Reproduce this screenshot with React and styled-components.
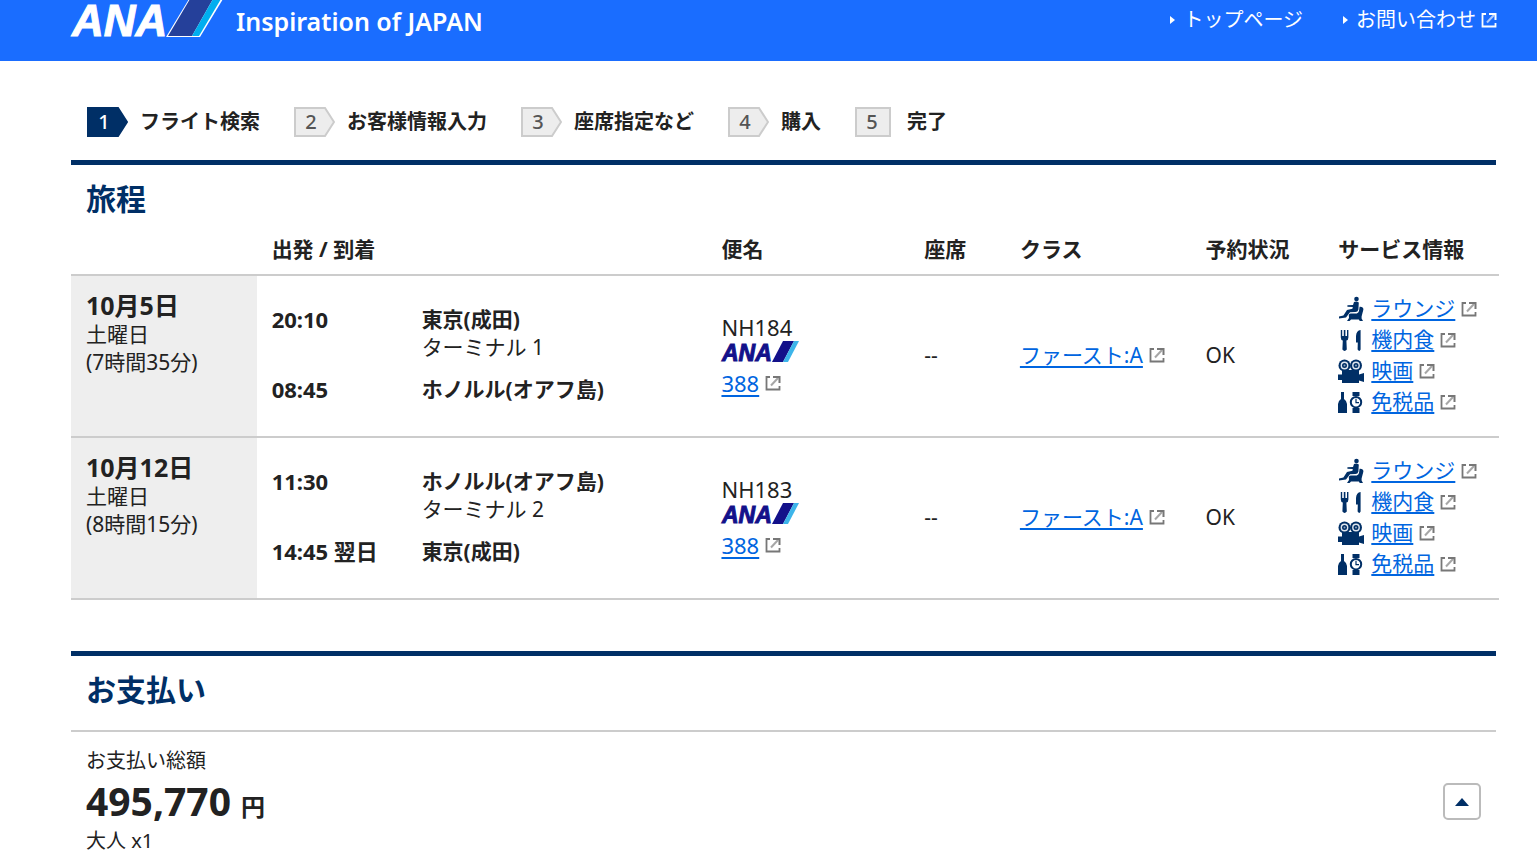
import React from 'react';
import styled, { createGlobalStyle } from "styled-components"


const steps = [
  { no: 1, label: "フライト検索" },
  { no: 2, label: "お客様情報入力" },
  { no: 3, label: "座席指定など" },
  { no: 4, label: "購入" },
  { no: 5, label: "完了" },
]

const flights = [
  {
    date: "10月5日", day: "土曜日", duration: "(7時間35分)",
    dep: { time: "20:10", place: "東京(成田)", terminal: "ターミナル 1" },
    arr: { time: "08:45", place: "ホノルル(オアフ島)" },
    no: "NH184", plane: "388", seat: "--", cabin: "ファースト:A", status: "OK",
  },
  {
    date: "10月12日", day: "土曜日", duration: "(8時間15分)",
    dep: { time: "11:30", place: "ホノルル(オアフ島)", terminal: "ターミナル 2" },
    arr: { time: "14:45 翌日", place: "東京(成田)" },
    no: "NH183", plane: "388", seat: "--", cabin: "ファースト:A", status: "OK",
  },
]

const services = [
  { label: "ラウンジ", Icon: LoungeIcon },
  { label: "機内食", Icon: MealIcon },
  { label: "映画", Icon: MovieIcon },
  { label: "免税品", Icon: DutyFreeIcon },
]


function HeaderLogo() {
  return (
    <Logo width="151" height="38" viewBox="0 0 151 38" role="img" aria-label="ANA">
      <LogoText x="1" y="36" fontSize="44" fill="#fff" stroke="#fff" strokeWidth="1">ANA</LogoText>
      <path d="M95 37 L118 -1 H152 L129 37 Z" fill="#fff" />
      <path d="M97 36 L119 -1 H142 L121 36 Z" fill="#25409a" />
      <path d="M121 36 L142 -1 H150 L128 36 Z" fill="#00aeef" />
    </Logo>
  )
}

function CarrierLogo() {
  return (
    <Carrier width="78" height="21" viewBox="0 0 78 21" role="img" aria-label="ANA">
      <LogoText x="1" y="20" fontSize="23" fill="#13118a" stroke="#13118a" strokeWidth="1">ANA</LogoText>
      <path d="M51 21 L62 0 H73 L62 21 Z" fill="#13118a" />
      <path d="M62 21 L73 0 H78 L67 21 Z" fill="#3db5ea" />
    </Carrier>
  )
}

function External({ light }) {
  return (
    <svg width="16" height="16" viewBox="0 0 16 16" fill="none" stroke={light ? "#fff" : "#777"} aria-hidden="true">
      <path d="M5 2 H1.5 V14.5 H14.5 V11" strokeWidth="1.8" />
      <path d="M8 2 H14.5 V8" strokeWidth="2" />
      <path d="M13 3 L6 10.5" strokeWidth="2" opacity="0.65" />
    </svg>
  )
}

function LoungeIcon() {
  return (
    <svg width="26" height="26" viewBox="0 0 26 26" fill="#002f66" aria-hidden="true">
      <circle cx="18.5" cy="3" r="2.3" />
      <path d="M16 6 Q18.5 5 20.8 6.4 L20.4 13.5 Q19.8 16 17.4 16 L12 16.2 L8 21.5 L1 22.5 V20.6 L5.4 19.6 L9 14 L14.4 12.8 L14.8 11 L9.4 10.8 V9.2 L15 9 Z" />
      <path d="M21.6 10.8 Q25.4 10.5 25.4 13.6 L23.6 20.5 V22.5 L25 25 H21.8 L20.8 23.4 H13 L11.6 25 H9 L11 22 L10.8 19 Q11 17.2 13 17.4 H18.8 Q20.6 17 21 15 Z" />
    </svg>
  )
}

function MealIcon() {
  return (
    <svg width="26" height="26" viewBox="0 0 26 26" fill="#002f66" aria-hidden="true">
      <path d="M2.8 3 H4.2 V9 H5.8 V3 H7.4 V9 H9 V3 H10.4 V10.5 Q10.4 13 8.4 13.5 L8.8 22.5 Q6.6 25.4 4.4 22.5 L4.8 13.5 Q2.8 13 2.8 10.5 Z" />
      <path d="M22.6 3 V22.5 Q21.4 25.4 19.6 22.5 L19.8 15.5 H18 V9 Q18.4 3.6 22.6 3 Z" />
    </svg>
  )
}

function MovieIcon() {
  return (
    <svg width="26" height="26" viewBox="0 0 26 26" fill="#002f66" aria-hidden="true">
      <circle cx="6.5" cy="7.5" r="6" />
      <circle cx="18" cy="7.5" r="6" />
      <path d="M4 12 H21 V16.5 L26 15 V24 L21 22.5 V25 H4 V22 H0 V16.5 H4 Z" />
      <g fill="none" stroke="#dfe6ee" strokeWidth="1.4">
        <circle cx="6.5" cy="7.5" r="3.2" />
        <circle cx="18" cy="7.5" r="3.2" />
      </g>
      <circle cx="6.5" cy="7.5" r="1" fill="#8fa5bf" />
      <circle cx="18" cy="7.5" r="1" fill="#8fa5bf" />
    </svg>
  )
}

function DutyFreeIcon() {
  return (
    <svg width="26" height="26" viewBox="0 0 26 26" fill="#002f66" aria-hidden="true">
      <path d="M3 3 H6 V10 Q9 12 9 15 V24 H0 V15 Q0 12 3 10 Z" />
      <path d="M14.5 3 H21.5 V7 H14.5 Z M14.5 19 H21.5 V24 H14.5 Z" />
      <circle cx="18" cy="13.2" r="5.2" fill="#fff" stroke="#002f66" strokeWidth="2" />
      <path d="M18 9.8 V13.6 H21" fill="none" stroke="#002f66" strokeWidth="1.2" />
    </svg>
  )
}

function StepBadge({ no, last }) {
  const on = no === 1
  return (
    <Badge $on={on} $last={last}>
      <svg width="100%" height="30" viewBox={last ? "0 0 36 30" : "0 0 41 30"} aria-hidden="true">
        <path
          d={last ? "M1 1 H35 V29 H1 Z" : "M1 1 H31 L40 15 L31 29 H1 Z"}
          fill={on ? "#002f66" : "#ededed"}
          stroke={on ? "#002f66" : "#ccc"}
          strokeWidth="2"
        />
      </svg>
      <BadgeNo>{no}</BadgeNo>
    </Badge>
  )
}


export default function App() {

  return (
    <>
    <Global />
    <Head>
      <Brand>
        <HeaderLogo />
        <Tagline>Inspiration of JAPAN</Tagline>
      </Brand>
      <Nav>
        <NavLink href="#top"><Arrow />トップページ</NavLink>
        <NavLink href="#contact"><Arrow />お問い合わせ<External light /></NavLink>
      </Nav>
    </Head>

    <Main>
      <Steps>
        {steps.map(({ no, label }) => (
          <Step key={no}>
            <StepBadge no={no} last={no === steps.length} />
            {label}
          </Step>
        ))}
      </Steps>

      <Section>
        <Title>旅程</Title>
        <Table>
          <colgroup>
            <Col $w="13%" />
            <Col $w="31.5%" />
            <Col $w="14.2%" />
            <Col $w="6.7%" />
            <Col $w="13%" />
            <Col $w="9.3%" />
            <Col $w="12.3%" />
          </colgroup>
          <thead>
            <tr>
              <Th />
              <Th>出発 / 到着</Th>
              <Th>便名</Th>
              <Th>座席</Th>
              <Th>クラス</Th>
              <Th>予約状況</Th>
              <Th>サービス情報</Th>
            </tr>
          </thead>
          <tbody>
            {flights.map((f) => (
              <tr key={f.no}>
                <DateCell>
                  <FlightDate>{f.date}</FlightDate>
                  <div>{f.day}</div>
                  <div>{f.duration}</div>
                </DateCell>
                <Td>
                  <Leg>
                    <Time>{f.dep.time}</Time>
                    <div>
                      <Place>{f.dep.place}</Place>
                      <div>{f.dep.terminal}</div>
                    </div>
                    <Time>{f.arr.time}</Time>
                    <Place>{f.arr.place}</Place>
                  </Leg>
                </Td>
                <Td>
                  <Latin>{f.no}</Latin>
                  <CarrierLogo />
                  <LinkRow><Latin><Link href="#plane">{f.plane}</Link></Latin><External /></LinkRow>
                </Td>
                <Td>{f.seat}</Td>
                <Td><LinkRow><Link href="#class">{f.cabin}</Link><External /></LinkRow></Td>
                <Td>{f.status}</Td>
                <Td>
                  <ServiceList>
                    {services.map(({ label, Icon }) => (
                      <Service key={label}>
                        <Icon />
                        <LinkRow><Link href="#service">{label}</Link><External /></LinkRow>
                      </Service>
                    ))}
                  </ServiceList>
                </Td>
              </tr>
            ))}
          </tbody>
        </Table>
      </Section>

      <Section>
        <Title>お支払い</Title>
        <Payment>
          <PayLabel>お支払い総額</PayLabel>
          <Amount>495,770 <Yen>円</Yen></Amount>
          <PayLabel>大人 x1</PayLabel>
        </Payment>
      </Section>
    </Main>

    <ToTop type="button" aria-label="ページの先頭へ">
      <svg width="14" height="8" viewBox="0 0 14 8" aria-hidden="true">
        <path d="M7 0 L14 8 H0 Z" fill="#002f66" />
      </svg>
    </ToTop>
    </>
  )
}

const Global = createGlobalStyle`
  * {
    box-sizing: border-box;
  }

  body {
    margin: 0;
    background: #fff;
    color: #222;
    font-family: "Noto Sans", "Noto Sans CJK JP", sans-serif;
    font-size: 21px;
    line-height: 28px;
  }

  svg {
    display: block;
    flex: none;
  }
`

const Head = styled.header`
  display: flex;
  align-items: flex-start;
  justify-content: space-between;
  height: 61px;
  padding: 0 40px 0 71px;
  background: #1a6dff;
  color: #fff;
`

const Brand = styled.div`
  display: flex;
  gap: 14px;
`

const Logo = styled.svg`
  overflow: visible;
`

const LogoText = styled.text`
  font-family: "Liberation Sans", Arial, sans-serif;
  font-weight: 700;
  font-style: italic;
`

const Tagline = styled.div`
  padding-top: 5px;
  font-size: 25px;
  line-height: 32px;
  font-weight: 600;
  white-space: nowrap;
`

const Nav = styled.nav`
  display: flex;
  gap: 40px;
  padding-top: 6px;
`

const NavLink = styled.a`
  display: flex;
  align-items: center;
  gap: 5px;
  color: #fff;
  font-size: 20px;
  text-decoration: none;
  white-space: nowrap;
`

const Arrow = styled.span`
  margin-right: 3px;
  border-left: 5px solid #fff;
  border-top: 4px solid transparent;
  border-bottom: 4px solid transparent;
`

const Main = styled.main`
  padding: 46px 41px 0 71px;
`

const Steps = styled.ol`
  display: flex;
  gap: 34px;
  margin: 0 0 23px;
  padding: 0 16px;
  list-style: none;
`

const Step = styled.li`
  display: flex;
  align-items: center;
  gap: 12px;
  font-size: 20px;
  line-height: 30px;
  font-weight: 700;
  white-space: nowrap;
`

const Badge = styled.span`
  display: grid;
  width: ${(p) => (p.$last ? "36px" : "41px")};
  margin-right: ${(p) => (p.$last ? "4px" : "0")};
  color: ${(p) => (p.$on ? "#fff" : "#555")};

  > * {
    grid-area: 1 / 1;
  }
`

const BadgeNo = styled.span`
  width: 34px;
  text-align: center;
  font-size: 20px;
  font-weight: 500;
`

const Section = styled.section`
  margin-bottom: 51px;
  border-top: 5px solid #002f66;

  &:last-child {
    margin-bottom: 0;
  }
`

const Title = styled.h2`
  margin: 0;
  padding: 14px 15px 1px;
  color: #002f66;
  font-size: 30px;
  line-height: 40px;
  font-weight: 700;
`

const Table = styled.table`
  width: calc(100% + 3px);
  table-layout: fixed;
  border-collapse: collapse;
`

const Col = styled.col`
  width: ${(p) => p.$w};
`

const Th = styled.th`
  padding: 13px 0 9px 15px;
  border-bottom: 2px solid #ccc;
  line-height: 32px;
  text-align: left;
  white-space: nowrap;
`

const Td = styled.td`
  padding: 17px 0 19px 15px;
  border-bottom: 2px solid #ccc;
  vertical-align: middle;
  white-space: nowrap;
`

const DateCell = styled(Td)`
  padding-top: 14px;
  background: #eee;
  vertical-align: top;
`

const FlightDate = styled.div`
  font-size: 25px;
  line-height: 30px;
  font-weight: 700;
`

const Leg = styled.div`
  display: grid;
  grid-template-columns: 150px 1fr;
  row-gap: 14px;
  padding-bottom: 3px;
`

const Latin = styled.div`
  font-size: 22px;
`

const Time = styled(Latin)`
  font-weight: 700;
`

const Place = styled.div`
  font-weight: 700;
`

const Carrier = styled.svg`
  margin-bottom: 7px;
  overflow: visible;
`

const LinkRow = styled.div`
  display: flex;
  align-items: center;
  gap: 6px;
`

const Link = styled.a`
  color: #0065e0;
  text-decoration: underline;
  text-decoration-thickness: 2px;
  text-decoration-skip-ink: none;
  text-underline-offset: 3px;
`

const ServiceList = styled.ul`
  margin: 0;
  padding: 0;
  list-style: none;
`

const Service = styled.li`
  display: flex;
  align-items: center;
  gap: 7px;
  line-height: 31px;
`

const Payment = styled.div`
  margin-top: 19px;
  padding: 15px 15px 0;
  border-top: 2px solid #ccc;
`

const PayLabel = styled.div`
  font-size: 20px;
`

const Amount = styled.div`
  font-size: 39px;
  line-height: 52px;
  font-weight: 700;
`

const Yen = styled.span`
  font-size: 24px;
  line-height: 24px;
`

const ToTop = styled.button`
  position: fixed;
  right: 56px;
  bottom: 45px;
  display: flex;
  align-items: center;
  justify-content: center;
  width: 38px;
  height: 37px;
  padding: 0;
  border: 2px solid #bbb;
  border-radius: 5px;
  background: #fff;
  cursor: pointer;
`
